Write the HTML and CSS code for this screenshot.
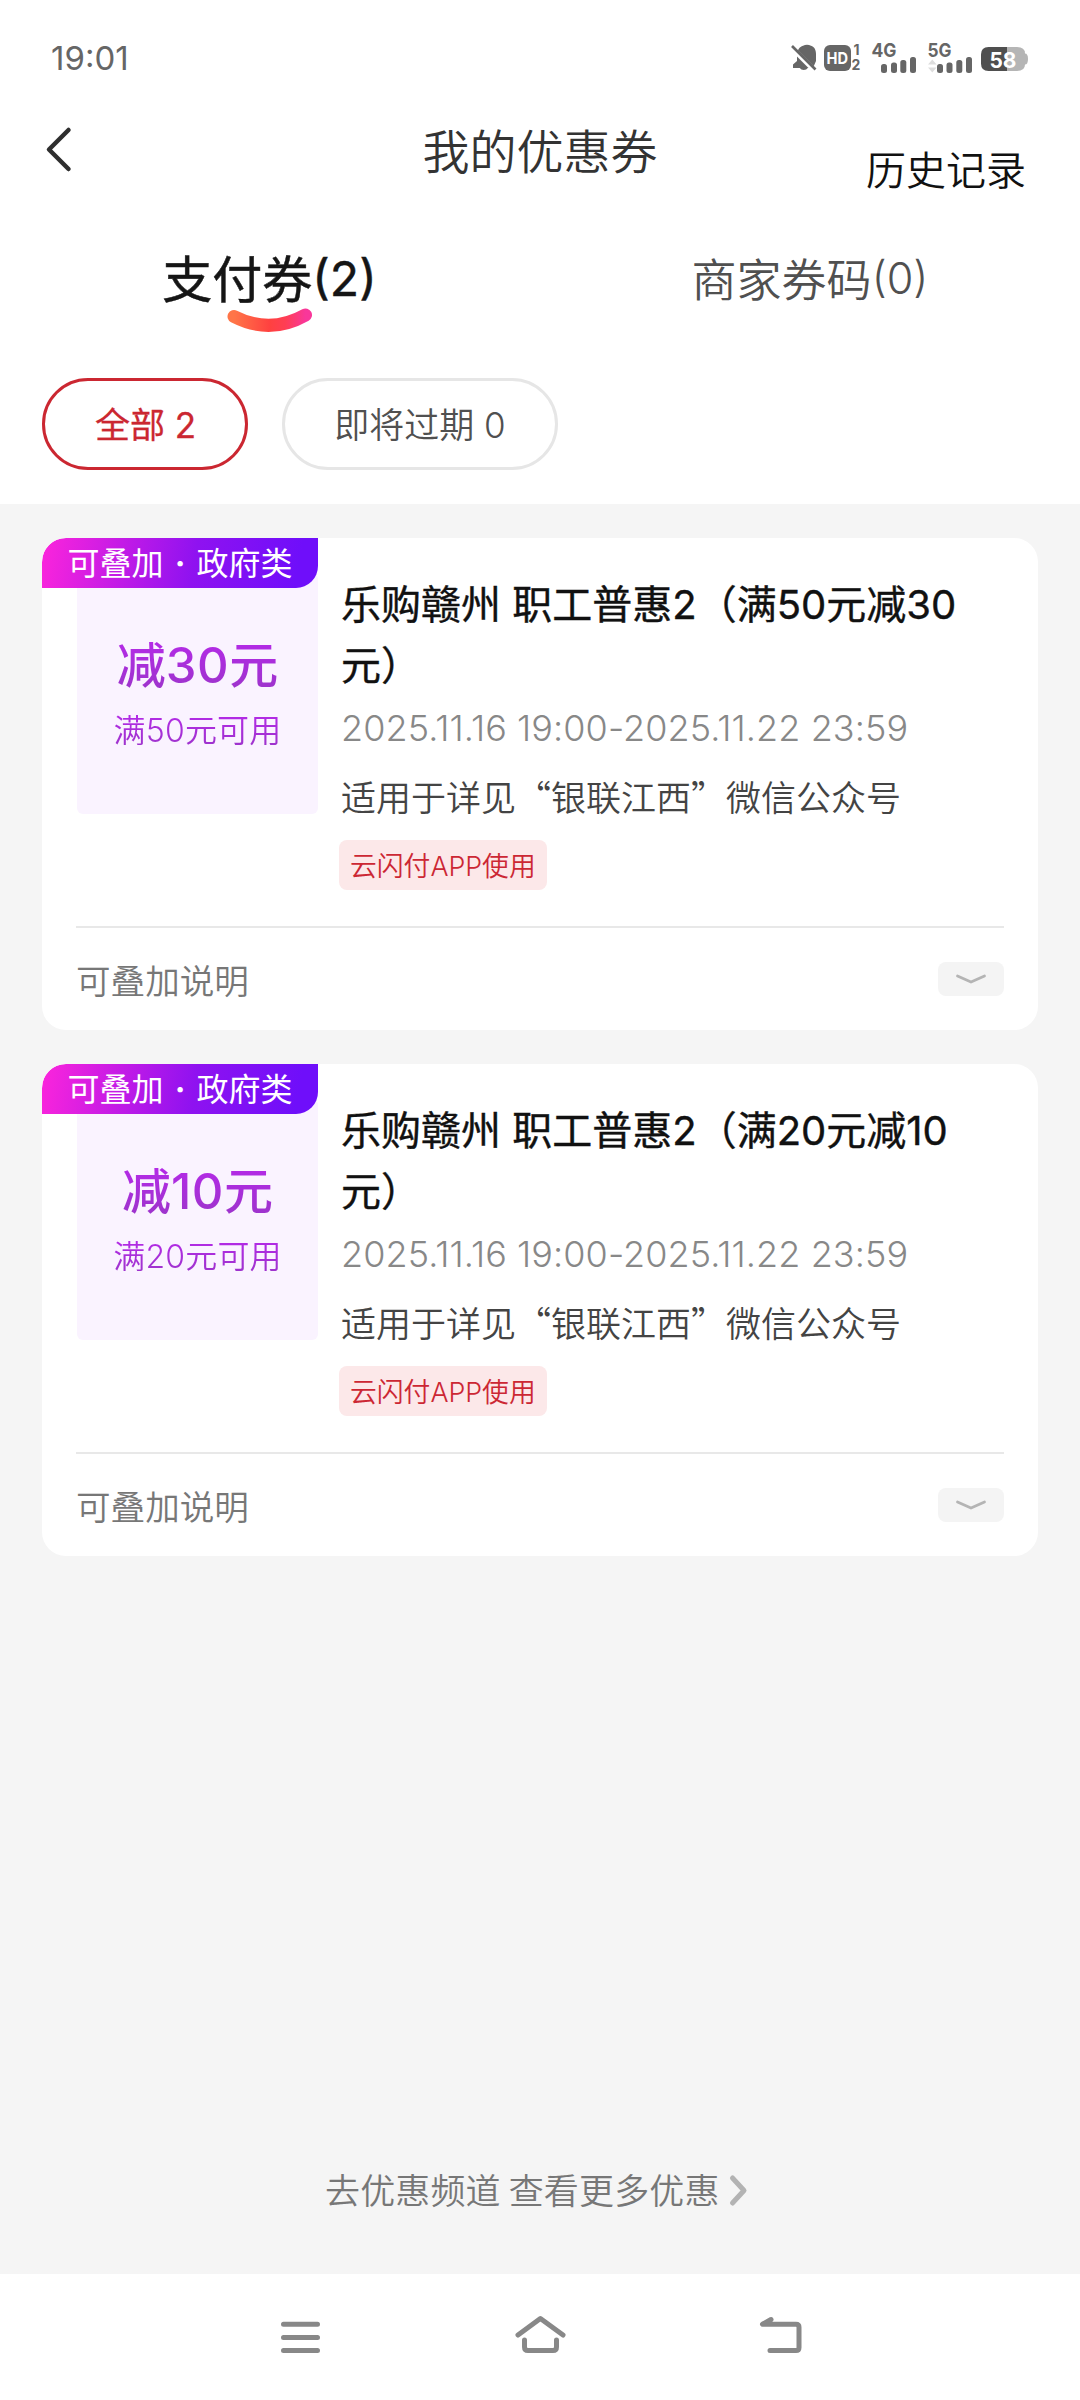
FILE: index.html
```html
<!DOCTYPE html>
<html lang="zh-CN">
<head>
<meta charset="utf-8">
<title>我的优惠券</title>
<link rel="stylesheet" href="styles.css">
</head>
<body>
<div class="screen">
  <header class="top">
    <div class="status">
      <span class="clock">19:01</span>
      <svg class="status-icons" width="240" height="40" viewBox="790 38 240 40">
        <g fill="#666">
          <path d="M793 68v-3.500l4-3.500v-6c0-5 2.500-8 6-9.200q4-2 8 0c3.500 1.200 5 4.200 5 8.200v7l-3 7h-5.200a4.500 3.500 0 0 1-8 0z"/>
          <path d="M791.500 47.500l24 24" stroke="#fff" stroke-width="5"/>
          <path d="M792 46l23.500 23.500" stroke="#666" stroke-width="2.600"/>
          <rect x="824" y="45" width="27" height="26" rx="6"/>
          <rect x="881" y="64" width="6" height="9" rx="2.500"/><rect x="891" y="62.500" width="6" height="10.500" rx="2.500"/><rect x="900.300" y="60" width="6" height="13" rx="2.500"/><rect x="910" y="57" width="6" height="16" rx="2.500"/>
          <rect x="937" y="64" width="6" height="9" rx="2.500"/><rect x="946.500" y="62.500" width="6" height="10.500" rx="2.500"/><rect x="956.300" y="60" width="6" height="13" rx="2.500"/><rect x="966" y="57" width="6" height="16" rx="2.500"/>
        </g>
        <path d="M928 64.500l4.300-5 4.300 5zM928 67.500l4.300 5 4.300-5z" fill="#ddd"/>
        <path d="M989 47h28q8 0 8 6.500 3 0 3 5.500t-3 5.500q0 6.500-8 6.500h-28z" fill="#b5b5b5"/>
        <path d="M1007 47h-18.500q-7.500 0-7.500 7.500v9q0 7.500 7.500 7.500h18.500z" fill="#4f4f4f"/>
        <g class="status-text">
          <text x="826.500" y="64" font-size="16.500" textLength="21.500" lengthAdjust="spacingAndGlyphs" fill="#fff" class="light">HD</text>
          <text x="853.500" y="55" font-size="14">1</text>
          <text x="851.500" y="70" font-size="14">2</text>
          <text x="871.500" y="57" font-size="19" textLength="25" lengthAdjust="spacingAndGlyphs">4G</text>
          <text x="927.500" y="57" font-size="19" textLength="24" lengthAdjust="spacingAndGlyphs">5G</text>
          <text x="989.500" y="67.500" font-size="21.500" textLength="27" lengthAdjust="spacingAndGlyphs" class="light">58</text>
        </g>
      </svg>
    </div>
    <div class="titlebar">
      <svg class="back" width="30" height="48" viewBox="44 126 30 48"><path d="M68.500 130L49 149.500 68.500 169" fill="none" stroke="#2e2e2e" stroke-width="4.500" stroke-linecap="round" stroke-linejoin="round"/></svg>
      <h1 class="title">我的优惠券</h1>
      <span class="history">历史记录</span>
    </div>
    <nav class="tabs">
      <div class="tab tab-active">支付券<span class="count">(2)</span>
        <svg class="smile" width="86" height="25" viewBox="227 308 86 25"><defs><linearGradient id="smile" x1="0" x2="1"><stop offset="0" stop-color="#ff7548"/><stop offset=".5" stop-color="#ff4140"/><stop offset=".72" stop-color="#ff3e54"/><stop offset="1" stop-color="#f9379a"/></linearGradient></defs><path d="M234 316.500Q270 335 305.500 315" fill="none" stroke="url(#smile)" stroke-width="13" stroke-linecap="round"/></svg>
      </div>
      <div class="tab">商家券码<span class="count">(0)</span></div>
    </nav>
    <div class="filters">
      <span class="pill pill-active">全部 2</span>
      <span class="pill">即将过期 0</span>
    </div>
  </header>
  <main class="list">
    <article class="card">
      <div class="card-body">
        <div class="ribbon">可叠加<span class="dot">·</span>政府类</div>
        <div class="amount"><strong class="off">减<span class="num">30</span>元</strong><span class="cond">满<span class="num">50</span>元可用</span></div>
        <div class="info">
          <h2 class="name">乐购赣州 职工普惠2（满50元减30元）</h2>
          <p class="date">2025.11.16 19:00-2025.11.22 23:59</p>
          <p class="desc">适用于详见“银联江西”微信公众号</p>
          <span class="tag">云闪付APP使用</span>
        </div>
      </div>
      <div class="card-foot"><span>可叠加说明</span><span class="expand"><svg width="32" height="12" viewBox="0 0 32 12"><path d="M2.500 3L16 9 29.500 3" fill="none" stroke="#b4b4b4" stroke-width="2.800" stroke-linecap="round" stroke-linejoin="round"/></svg></span></div>
    </article>
    <article class="card">
      <div class="card-body">
        <div class="ribbon">可叠加<span class="dot">·</span>政府类</div>
        <div class="amount"><strong class="off">减<span class="num">10</span>元</strong><span class="cond">满<span class="num">20</span>元可用</span></div>
        <div class="info">
          <h2 class="name">乐购赣州 职工普惠2（满20元减10元）</h2>
          <p class="date">2025.11.16 19:00-2025.11.22 23:59</p>
          <p class="desc">适用于详见“银联江西”微信公众号</p>
          <span class="tag">云闪付APP使用</span>
        </div>
      </div>
      <div class="card-foot"><span>可叠加说明</span><span class="expand"><svg width="32" height="12" viewBox="0 0 32 12"><path d="M2.500 3L16 9 29.500 3" fill="none" stroke="#b4b4b4" stroke-width="2.800" stroke-linecap="round" stroke-linejoin="round"/></svg></span></div>
    </article>
    <div class="more"><span>去优惠频道 查看更多优惠</span><svg width="20" height="34" viewBox="728 2173 20 34"><path d="M732.500 2178L744 2190.500 732.500 2203" fill="none" stroke="#b3b3b3" stroke-width="5" stroke-linecap="round" stroke-linejoin="round"/></svg></div>
  </main>
  <footer class="navbar">
    <svg width="48" height="40" viewBox="276 2315 48 40"><path d="M283.500 2324.300h34M283.500 2337.500h34M283.500 2350.500h34"/></svg>
    <svg width="56" height="40" viewBox="512 2315 56 40"><path d="M518 2335L540.400 2318.500 563 2335M524.500 2340v7q0 3.500 3.500 3.500h25q3.500 0 3.500-3.500v-7"/></svg>
    <svg width="48" height="40" viewBox="756 2315 48 40"><path d="M771 2319.500L762.500 2324.300H796q3 0 3 3v20.200q0 3-3 3h-26"/></svg>
  </footer>
</div>
</body>
</html>
```
FILE: styles.css
```css
* { box-sizing: border-box; margin: 0; padding: 0; }
body {
  width: 1080px;
  background: #fff;
  font-family: "Noto Sans CJK SC", sans-serif;
  font-weight: 350;
  color: #1a1a1a;
}
svg { display: block; flex: none; }
.screen { display: flex; flex-direction: column; height: 2400px; }
.top { height: 504px; flex: none; background: #fff; }

.status { display: flex; justify-content: space-between; padding: 38px 50px 0 51px; height: 90px; }
.clock { font: 400 33px/40px Inter, sans-serif; color: #666; }
.status-text { font-family: Inter, sans-serif; font-weight: 700; fill: #666; }
.light { fill: #fff; }

.titlebar { display: grid; grid-template-columns: 1fr auto 1fr; height: 125px; padding: 0 54px; }
.back { margin: 36px 0 0 -10px; }
.title { font-size: 47px; font-weight: 350; line-height: 60px; margin-top: 29px; color: #333; }
.history { justify-self: end; font-size: 40px; line-height: 50px; margin-top: 53px; color: #111; }

.tabs { display: grid; grid-template-columns: 1fr 1fr; height: 163px; line-height: 60px; padding-top: 31px; }
.tab { display: flex; justify-content: center; position: relative; padding-top: 2px; font-size: 45px; color: #505050; }
.tab-active { padding: 0 1px 0 0; font-size: 50px; font-weight: 400; color: #151515; -webkit-text-stroke: .5px; }
.count { font-family: Inter, sans-serif; font-size: .96em; }
.tab-active .count { margin-top: 3px; }
.smile { position: absolute; left: 227px; top: 62px; }

.filters { display: flex; gap: 34px; padding-left: 42px; }
.pill {
  height: 92px; padding: 0 49px; border: 3px solid #e6e6e6; border-radius: 46px;
  font: 350 35px/88px Inter, "Noto Sans CJK SC", sans-serif; color: #505050;
}
.pill-active { padding: 0 49px 0 50px; border-color: #cb2731; color: #cb2731; font-weight: 400; -webkit-text-stroke: .3px; }

.list { flex: 1; display: flex; flex-direction: column; gap: 34px; padding: 34px 42px 0; background: #f5f5f5; }
.card { height: 492px; border-radius: 24px; background: #fff; overflow: hidden; }
.card-body { display: grid; grid-template-columns: 276px 1fr; grid-template-rows: 35px 1fr; height: 388px; }
.ribbon {
  position: relative; grid-area: 1 / 1; width: 276px; height: 50px;
  border-radius: 24px 0 22px 0;
  background: linear-gradient(100deg, #f824dc 2%, #8f12f0 55%, #6f0efa 92%);
  display: flex; justify-content: center;
  font-size: 32px; font-weight: 400; line-height: 46px; color: #fff;
}
.dot { width: 33px; text-align: center; font-family: Inter, sans-serif; font-weight: 700; line-height: 51px; }
.amount {
  grid-area: 2 / 1; width: 241px; height: 241px; margin-left: 35px; border-radius: 6px;
  background: #faf3ff; display: flex; flex-direction: column; align-items: center;
}
.off, .cond { color: transparent; background: linear-gradient(#b828ec, #9a35c8); -webkit-background-clip: text; background-clip: text; }
.off { font-size: 49px; font-weight: 500; line-height: 60px; margin-top: 59px; }
.cond { font-size: 32px; line-height: 42px; margin-top: 11px; letter-spacing: .2px; }
.num { font-family: Inter, sans-serif; }
.off .num { letter-spacing: .5px; }
.info { grid-area: 1 / 2 / 3 / 3; padding: 36px 60px 0 23px; }
.name { font: 400 40px/61px Inter, "Noto Sans CJK SC", sans-serif; color: #111; -webkit-text-stroke: .4px; }
.date { font: 350 36px/44px Inter, sans-serif; letter-spacing: .08px; color: #888; margin-top: 10px; white-space: nowrap; }
.desc { font-size: 35px; line-height: 50px; margin-top: 21px; color: #444; white-space: nowrap; }
.tag {
  display: inline-block; height: 50px; margin: 19px 0 0 -2px; padding: 0 11px; border-radius: 8px;
  background: #fce8e9; color: #cc2734; font: 350 26.800px/53px Inter, "Noto Sans CJK SC", sans-serif;
}
.card-foot {
  display: flex; align-items: center; justify-content: space-between;
  height: 104px; margin: 0 34px; border-top: 2px solid #e8e8e8;
  font-size: 34.600px; color: #777;
}
.expand { display: flex; align-items: center; justify-content: center; width: 66px; height: 34px; border-radius: 8px; background: #f4f4f4; }
.more {
  display: flex; align-items: center; gap: 8px; margin: auto 0 57px 283px; height: 54px;
  font-size: 35px; letter-spacing: .15px; color: #777;
}
.more span { margin-top: -4px; }

.navbar { display: grid; grid-template-columns: 48px 56px 48px; column-gap: 188px; padding: 41px 0 0 276px; height: 126px; flex: none; background: #fff; }
.navbar path { fill: none; stroke: #888; stroke-width: 5; stroke-linecap: round; stroke-linejoin: round; }
```
